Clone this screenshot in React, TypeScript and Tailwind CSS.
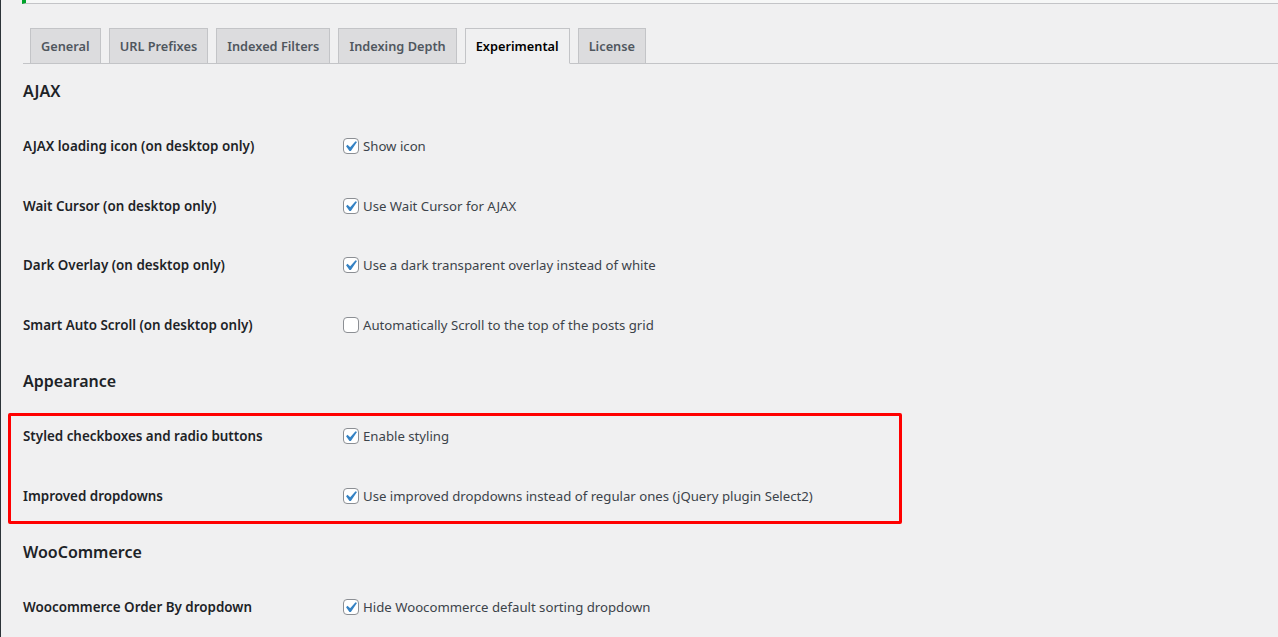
const tabs = ['General', 'URL Prefixes', 'Indexed Filters', 'Indexing Depth', 'Experimental', 'License']

type Row = { label: string; text: string; checked: boolean }

const sections: { title: string; rows: Row[] }[] = [
  {
    title: 'AJAX',
    rows: [
      { label: 'AJAX loading icon (on desktop only)', text: 'Show icon', checked: true },
      { label: 'Wait Cursor (on desktop only)', text: 'Use Wait Cursor for AJAX', checked: true },
      { label: 'Dark Overlay (on desktop only)', text: 'Use a dark transparent overlay instead of white', checked: true },
      { label: 'Smart Auto Scroll (on desktop only)', text: 'Automatically Scroll to the top of the posts grid', checked: false },
    ],
  },
  {
    title: 'Appearance',
    rows: [
      { label: 'Styled checkboxes and radio buttons', text: 'Enable styling', checked: true },
      { label: 'Improved dropdowns', text: 'Use improved dropdowns instead of regular ones (jQuery plugin Select2)', checked: true },
    ],
  },
  {
    title: 'WooCommerce',
    rows: [
      { label: 'Woocommerce Order By dropdown', text: 'Hide Woocommerce default sorting dropdown', checked: true },
    ],
  },
]

function Checkbox({ checked }: { checked: boolean }) {
  return (
    <span className="relative w-[16px] h-[16px] shrink-0 rounded-[4px] border border-[#8c8f94] bg-white">
      {checked && (
        <svg className="absolute left-[-4px] top-[-3px]" width="21" height="21" viewBox="0 0 20 20">
          <path d="M14.83 4.89l1.34.94-5.81 8.38H9.02L5.78 9.67l1.34-1.25 2.57 2.4z" fill="#3582c4" />
        </svg>
      )}
    </span>
  )
}

export default function App() {
  return (
    <div
      className="relative min-h-screen bg-[#f0f0f1] flex text-[13.2px]"
      style={{ fontFamily: '"Noto Sans", "Open Sans", sans-serif' }}
    >
      {/* admin menu edge */}
      <div className="w-[1px] bg-[#2c3338] shrink-0" />

      <div className="flex-1 pl-[22px]">
        {/* notice */}
        <div className="ml-[-1px] h-[4px] bg-[#f6f7f7] border-b border-[#c3c4c7] border-l-4 border-l-[#00a32a]" />

        {/* tabs */}
        <div className="mt-[24px] flex border-b border-[#c3c4c7] pl-[7px]">
          {tabs.map((t, i) => {
            const active = t === 'Experimental'
            return (
              <div
                key={t}
                className={
                  'mb-[-1px] border border-[#c3c4c7] px-[10px] py-[5px] text-[12.75px] leading-[24px] font-semibold whitespace-nowrap ' +
                  (i > 0 ? 'ml-[8px] ' : '') +
                  (active
                    ? 'bg-[#f0f0f1] text-black border-b-[#f0f0f1]'
                    : 'bg-[#dcdcde] text-[#50575e]')
                }
              >
                {t}
              </div>
            )
          })}
        </div>

        {sections.map((s, si) => (
          <div key={s.title}>
            <h2
              className={
                'h-[22px] leading-[22px] text-[16px] font-semibold text-[#1d2327] mb-[15px] ' +
                (si === 0 ? 'mt-[16px]' : si === 1 ? 'mt-[15px]' : 'mt-[14px]')
              }
            >
              {s.title}
            </h2>
            {s.rows.map((r) => (
              <div key={r.label} className="flex h-[59.6px]">
                <div className="w-[320px] shrink-0 pt-[20px] leading-[18px] text-[13.4px] font-semibold text-[#1d2327]">
                  {r.label}
                </div>
                <label className="pt-[20px] flex items-center gap-[4px] h-[38px] leading-[18px] text-[#3c434a]">
                  <Checkbox checked={r.checked} />
                  <span>{r.text}</span>
                </label>
              </div>
            ))}
          </div>
        ))}
      </div>

      {/* annotation */}
      <div className="absolute left-[8px] top-[413px] w-[894px] h-[111px] border-[3px] border-[#ff0000] rounded-[2px] pointer-events-none" />
    </div>
  )
}
